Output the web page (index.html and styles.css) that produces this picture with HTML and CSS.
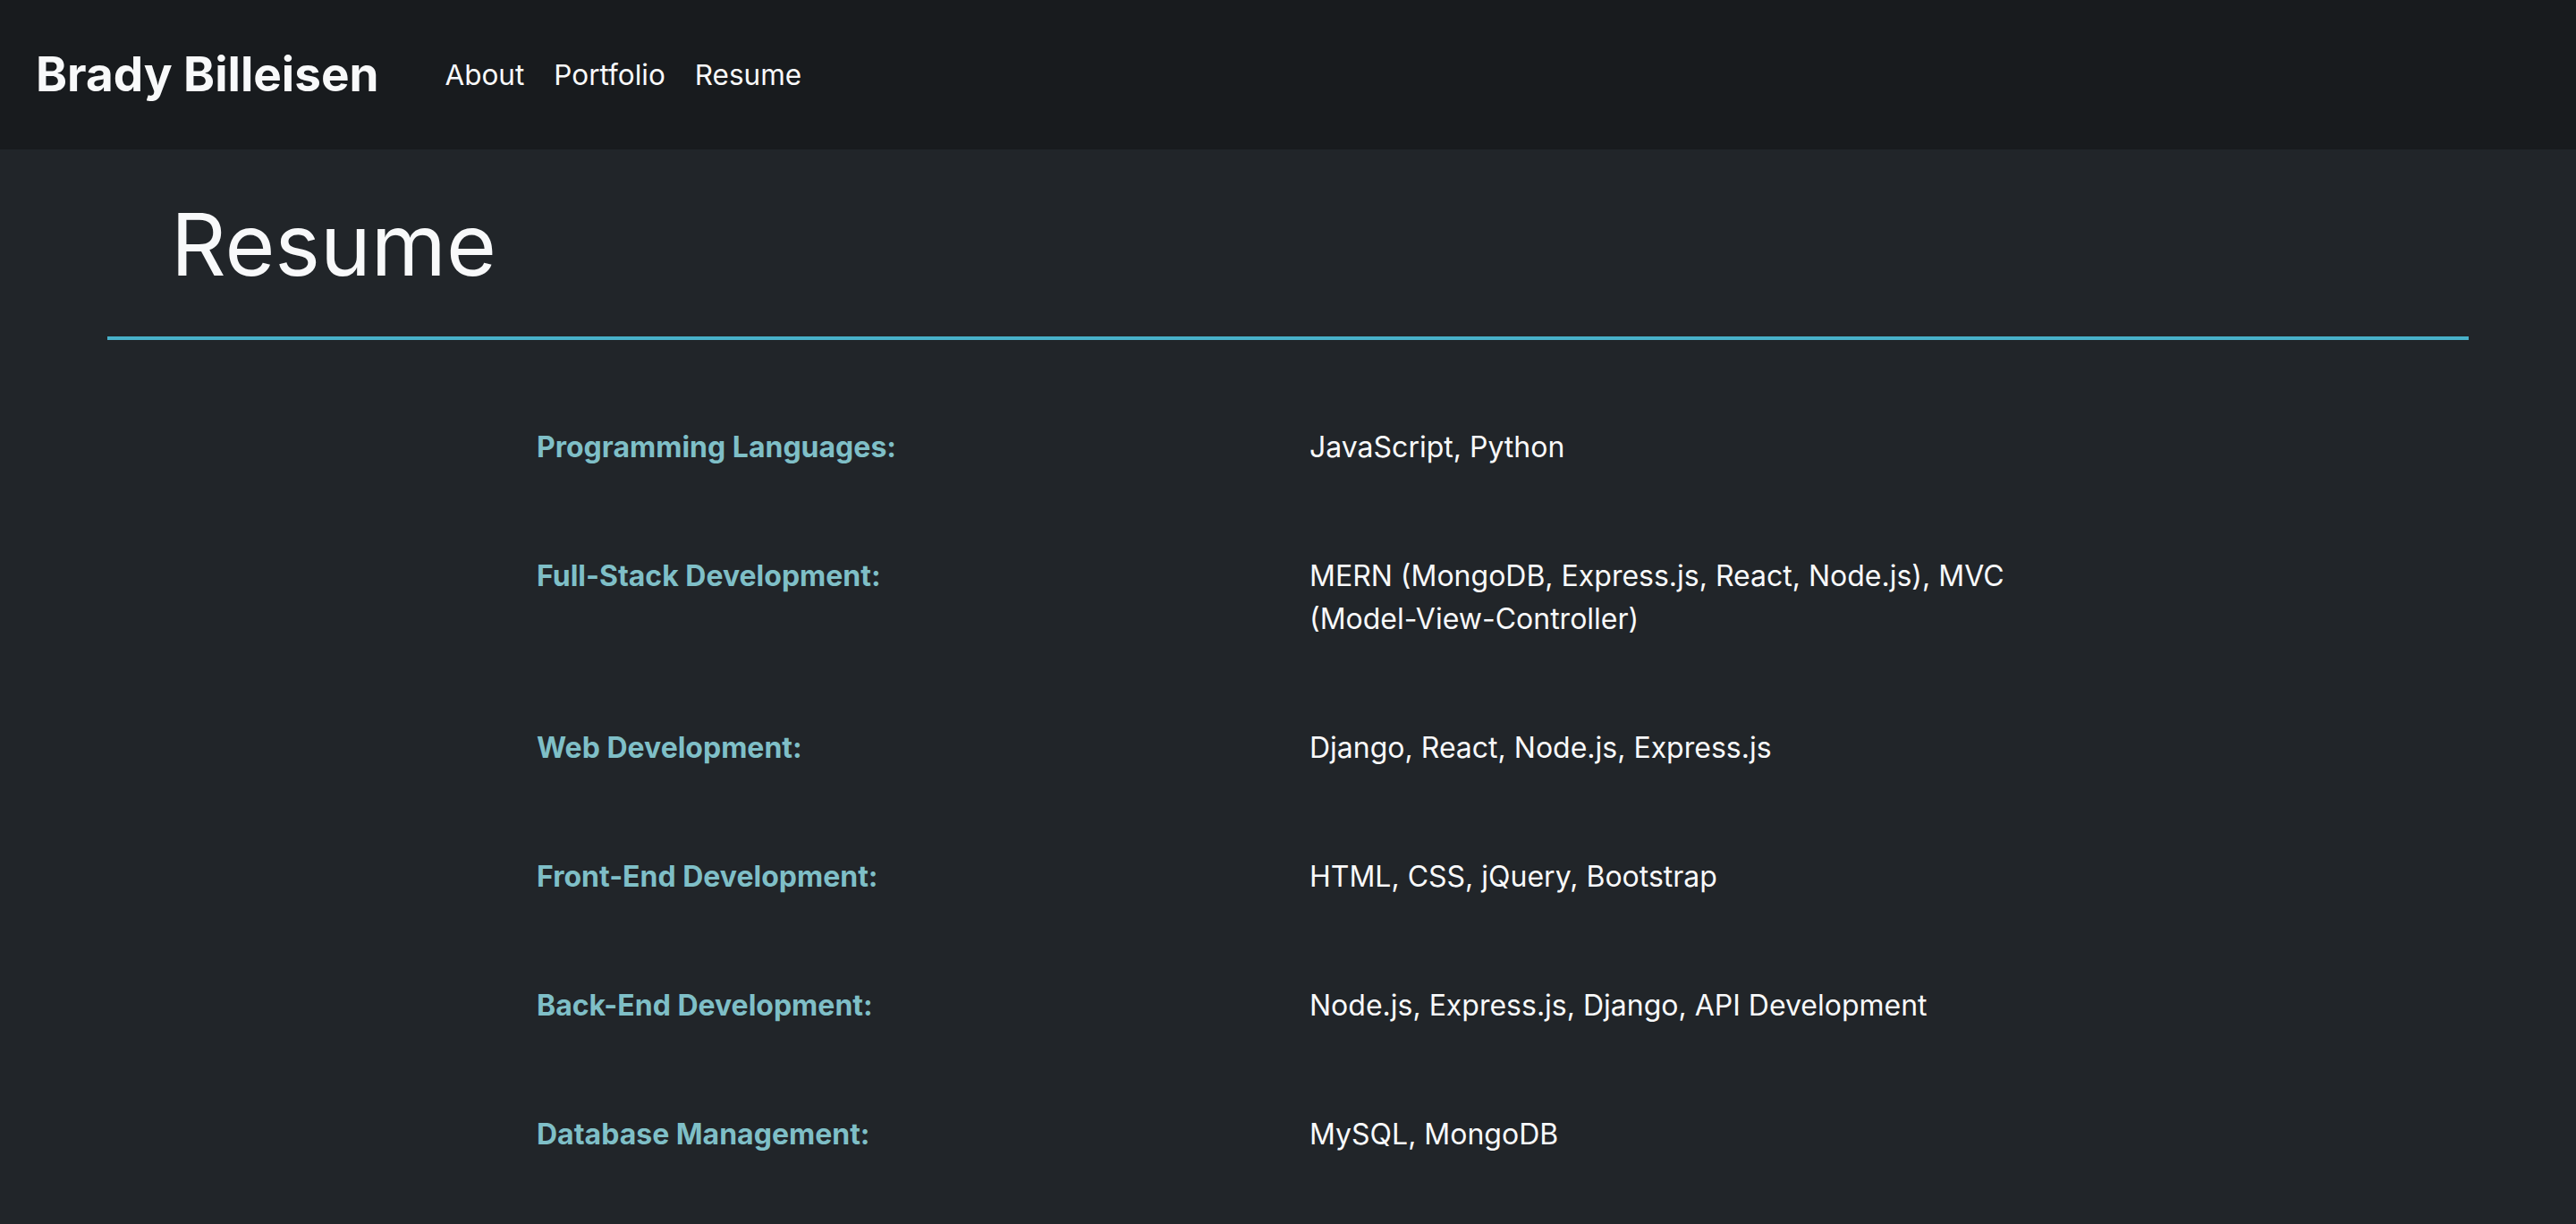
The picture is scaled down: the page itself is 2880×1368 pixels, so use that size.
FILE: index.html
```html
<!DOCTYPE html>
<html lang="en">
<head>
<meta charset="utf-8">
<title>Resume - Brady Billeisen</title>
<link rel="stylesheet" href="styles.css">
</head>
<body>
<nav class="navbar">
  <a class="brand" href="#">Brady Billeisen</a>
  <ul class="nav-links">
    <li><a class="nav-link" href="#">About</a></li>
    <li><a class="nav-link" href="#">Portfolio</a></li>
    <li><a class="nav-link" href="#">Resume</a></li>
  </ul>
</nav>
<main class="page">
  <h1 class="title">Resume</h1>
  <hr class="rule">
  <section class="skills">
    <div class="row">
      <div class="label">Programming Languages:</div>
      <div class="value">JavaScript, Python</div>
    </div>
    <div class="row">
      <div class="label">Full-Stack Development:</div>
      <div class="value">MERN (MongoDB, Express.js, React, Node.js), MVC <span class="nowrap">(Model-View-Controller)</span></div>
    </div>
    <div class="row">
      <div class="label">Web Development:</div>
      <div class="value">Django, React, Node.js, Express.js</div>
    </div>
    <div class="row">
      <div class="label">Front-End Development:</div>
      <div class="value">HTML, CSS, jQuery, Bootstrap</div>
    </div>
    <div class="row">
      <div class="label">Back-End Development:</div>
      <div class="value">Node.js, Express.js, Django, API Development</div>
    </div>
    <div class="row">
      <div class="label">Database Management:</div>
      <div class="value">MySQL, MongoDB</div>
    </div>
  </section>
</main>
</body>
</html>
```
FILE: styles.css
```css
* { box-sizing: border-box; }
html, body {
  margin: 0;
  padding: 0;
}
body {
  background: #212529;
  color: #f8f9fa;
  font-family: Inter, "Noto Sans", "Liberation Sans", sans-serif;
  font-size: 32px;
  line-height: 1.5;
  min-height: 1368px;
}
a { text-decoration: none; color: inherit; }

.navbar {
  height: 167px;
  background: #181b1e;
  display: flex;
  align-items: center;
  padding: 0 40px;
}
.brand {
  font-size: 53px;
  font-weight: 700;
  line-height: 1;
  color: #f8f9fa;
  margin-right: 58px;
}
.nav-links {
  display: flex;
  list-style: none;
  margin: 0;
  padding: 0;
}
.nav-link {
  display: block;
  padding: 16px 17px 16px 16px;
  font-size: 31.5px;
  color: #f8f9fa;
}

.title {
  margin: 49px 0 45px 191px;
  font-size: 96px;
  font-weight: 400;
  line-height: 1.2;
  color: #f8f9fa;
}
.rule {
  margin: 0 120px;
  height: 4px;
  border: 0;
  background: #48b1c9;
}
.skills {
  padding: 48px 0 0 600px;
}
.row {
  display: grid;
  grid-template-columns: 864px 1000px;
  padding: 48px 0;
}
.label {
  font-weight: 700;
  color: #7fbfc7;
}
.value {
  color: #f8f9fa;
}
.nowrap {
  white-space: nowrap;
}
```
